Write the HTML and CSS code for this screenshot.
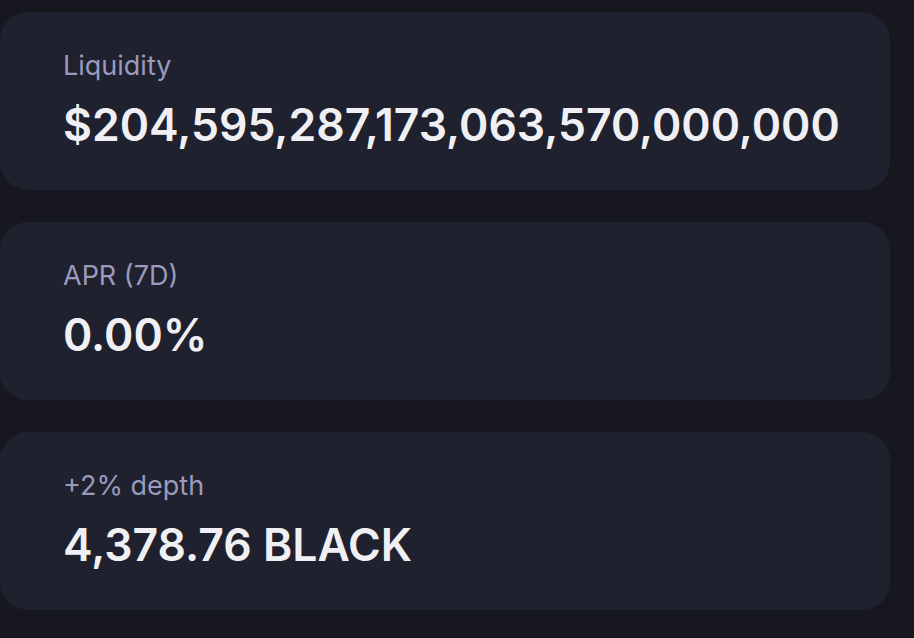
FILE: index.html
```html
<!DOCTYPE html>
<html>
<head>
  <title>Pool stats</title>
  <link rel="stylesheet" href="styles.css">
</head>
<body>
  <main class="stats">
    <div class="stat-card">
      <p class="stat-label">Liquidity</p>
      <p class="stat-value">$204,595,287,173,063,570,000,000</p>
    </div>
    <div class="stat-card">
      <p class="stat-label">APR (7D)</p>
      <p class="stat-value">0.00%</p>
    </div>
    <div class="stat-card">
      <p class="stat-label">+2% depth</p>
      <p class="stat-value">4,378.76 BLACK</p>
    </div>
  </main>
</body>
</html>
```

FILE: styles.css
```css
body {
  margin: 0;
  background-color: #17181f;
  font-family: Inter, "Noto Sans", sans-serif;
}

.stats {
  display: flex;
  flex-direction: column;
  gap: 32px;
  padding-top: 12px;
  width: 890px;
}

.stat-card {
  height: 178px;
  box-sizing: border-box;
  padding: 38px 0 0 63px;
  background-color: #1f212e;
  border-radius: 28px;
}

.stat-label {
  margin: 0;
  font-size: 27px;
  line-height: 32px;
  color: #9a9abd;
}

.stat-value {
  margin: 16px 0 0;
  font-size: 44.5px;
  line-height: 54px;
  font-weight: 600;
  color: #f0f0f4;
}
```
